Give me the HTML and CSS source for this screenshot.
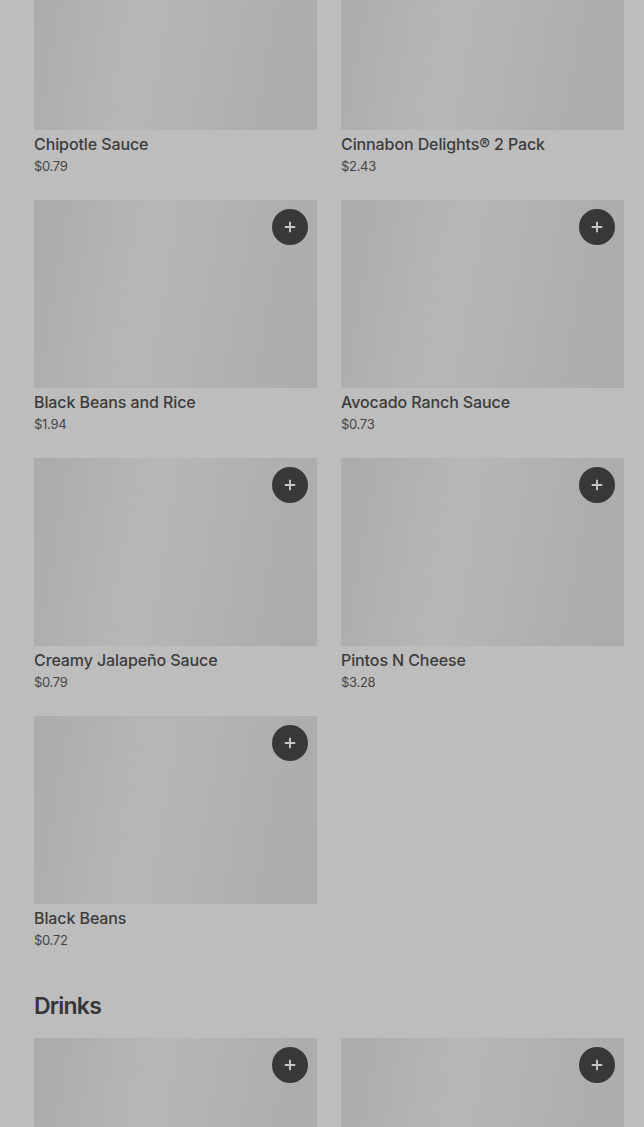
FILE: index.html
```html
<!DOCTYPE html>
<html>
<head>
<meta charset="utf-8">
<link rel="stylesheet" href="styles.css">
</head>
<body>
<div class="page">
  <div class="grid first">
    <div class="card"><div class="img"></div><div class="name">Chipotle Sauce</div><div class="price">$0.79</div></div>
    <div class="card"><div class="img"></div><div class="name">Cinnabon Delights® 2 Pack</div><div class="price">$2.43</div></div>
    <div class="card"><div class="img"><button class="add"><svg viewBox="0 0 16 16" width="14" height="14"><path d="M8 2v12M2 8h12" stroke="currentColor" stroke-width="2.2" fill="none"/></svg></button></div><div class="name">Black Beans and Rice</div><div class="price">$1.94</div></div>
    <div class="card"><div class="img"><button class="add"><svg viewBox="0 0 16 16" width="14" height="14"><path d="M8 2v12M2 8h12" stroke="currentColor" stroke-width="2.2" fill="none"/></svg></button></div><div class="name">Avocado Ranch Sauce</div><div class="price">$0.73</div></div>
    <div class="card"><div class="img"><button class="add"><svg viewBox="0 0 16 16" width="14" height="14"><path d="M8 2v12M2 8h12" stroke="currentColor" stroke-width="2.2" fill="none"/></svg></button></div><div class="name">Creamy Jalapeño Sauce</div><div class="price">$0.79</div></div>
    <div class="card"><div class="img"><button class="add"><svg viewBox="0 0 16 16" width="14" height="14"><path d="M8 2v12M2 8h12" stroke="currentColor" stroke-width="2.2" fill="none"/></svg></button></div><div class="name">Pintos N Cheese</div><div class="price">$3.28</div></div>
    <div class="card"><div class="img"><button class="add"><svg viewBox="0 0 16 16" width="14" height="14"><path d="M8 2v12M2 8h12" stroke="currentColor" stroke-width="2.2" fill="none"/></svg></button></div><div class="name">Black Beans</div><div class="price">$0.72</div></div>
  </div>
  <h2 class="section">Drinks</h2>
  <div class="grid">
    <div class="card"><div class="img"><button class="add"><svg viewBox="0 0 16 16" width="14" height="14"><path d="M8 2v12M2 8h12" stroke="currentColor" stroke-width="2.2" fill="none"/></svg></button></div></div>
    <div class="card"><div class="img"><button class="add"><svg viewBox="0 0 16 16" width="14" height="14"><path d="M8 2v12M2 8h12" stroke="currentColor" stroke-width="2.2" fill="none"/></svg></button></div></div>
  </div>
</div>
</body>
</html>
```
FILE: styles.css
```css
html, body {
  margin: 0;
  padding: 0;
  background: #bdbdbd;
  overflow: hidden;
  height: 1127px;
}
body {
  font-family: Inter, "Liberation Sans", sans-serif;
  color: #333333;
}
.page {
  padding: 0 20px 0 34px;
}
.grid {
  display: grid;
  grid-template-columns: 283px 283px;
  column-gap: 24px;
  row-gap: 24px;
}
.grid.first {
  margin-top: -58px;
}
.card {
  display: flex;
  flex-direction: column;
}
.img {
  position: relative;
  height: 188px;
  background: linear-gradient(100deg, #acacac 5%, #b7b7b7 40%, #adadad 85%, #acacac 100%);
  margin-bottom: 4px;
}
.add {
  position: absolute;
  top: 9px;
  right: 9px;
  width: 36px;
  height: 36px;
  border-radius: 50%;
  border: none;
  padding: 0;
  background: #383838;
  color: #c6c6c6;
  display: flex;
  align-items: center;
  justify-content: center;
}
.name {
  font-size: 16px;
  font-weight: 500;
  line-height: 20px;
  letter-spacing: -0.1px;
  color: #3c3c3c;
}
.price {
  margin-top: 2px;
  font-size: 13px;
  line-height: 20px;
  letter-spacing: -0.3px;
  color: #464646;
}
.section {
  margin: 40px 0 16px;
  font-size: 23px;
  line-height: 32px;
  font-weight: 600;
  letter-spacing: -0.8px;
  color: #363636;
}
```
